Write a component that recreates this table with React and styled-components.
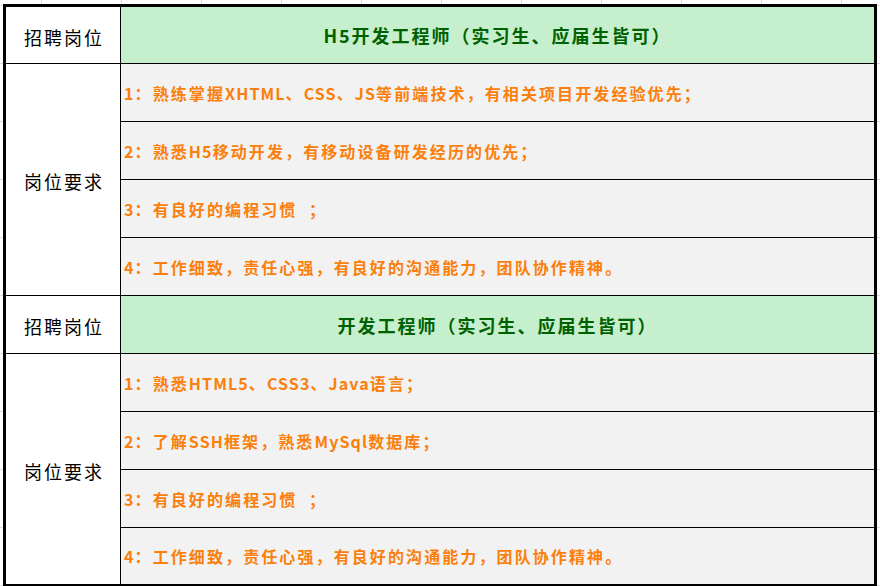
import styled, { createGlobalStyle } from "styled-components";

const GlobalStyle = createGlobalStyle`
  html, body {
    margin: 0;
    padding: 0;
  }
  body {
    min-height: 100vh;
    background-color: #fff;
    background-image:
      repeating-linear-gradient(90deg, transparent 0 41px, #dcdcdc 41px 42px, transparent 42px 80px),
      repeating-linear-gradient(180deg, transparent 0 5px, #dcdcdc 5px 6px, transparent 6px 58px);
    font-family: "Noto Sans CJK SC", "Microsoft YaHei", sans-serif;
  }
`;

const sections = [
  {
    title: "H5开发工程师（实习生、应届生皆可）",
    rows: "56px repeat(4, 57px)",
    items: [
      "1：熟练掌握XHTML、CSS、JS等前端技术，有相关项目开发经验优先；",
      "2：熟悉H5移动开发，有移动设备研发经历的优先；",
      "3：有良好的编程习惯  ；",
      "4：工作细致，责任心强，有良好的沟通能力，团队协作精神。",
    ],
  },
  {
    title: "开发工程师（实习生、应届生皆可）",
    rows: "repeat(4, 57px) 56px",
    items: [
      "1：熟悉HTML5、CSS3、Java语言；",
      "2：了解SSH框架，熟悉MySql数据库；",
      "3：有良好的编程习惯  ；",
      "4：工作细致，责任心强，有良好的沟通能力，团队协作精神。",
    ],
  },
];

// latin runs are set a little tighter than the CJK text around them
const withLatin = (text) =>
  text.split(/([A-Za-z0-9]+)/).map((part, i) =>
    /^[A-Za-z0-9]+$/.test(part) ? <Latin key={i}>{part}</Latin> : part
  );

function App() {
  return (
    <>
      <GlobalStyle />
      <Sheet>
        {sections.map((s, i) => (
          <Section key={i} $rows={s.rows}>
            <Label>招聘岗位</Label>
            <Title>{s.title}</Title>
            <Label $span={4}>岗位要求</Label>
            {s.items.map((item, j) => (
              <Requirement key={j}>{withLatin(item)}</Requirement>
            ))}
          </Section>
        ))}
      </Sheet>
    </>
  );
}

export default App;

const Sheet = styled.div`
  box-sizing: border-box;
  width: 874px;
  margin: 4px 0 0 3px;
  border: 3px solid #000;
  background: #000;
  display: grid;
  gap: 1px;
`;

const Section = styled.div`
  display: grid;
  grid-template-columns: 114px 1fr;
  grid-template-rows: ${(p) => p.$rows};
  gap: 1px;
`;

const Label = styled.div`
  grid-column: 1;
  grid-row: span ${(p) => p.$span || 1};
  background: #fff;
  display: flex;
  align-items: center;
  justify-content: center;
  padding-top: 3px;
  color: #000;
  font-size: 18px;
  letter-spacing: 2px;
  text-indent: 2px;
`;

const Title = styled.div`
  grid-column: 2;
  background: #c6efce;
  display: flex;
  align-items: center;
  justify-content: center;
  color: #006100;
  font-size: 18px;
  font-weight: 700;
  letter-spacing: 2px;
`;

const Requirement = styled.div`
  grid-column: 2;
  background: #f2f2f2;
  display: flex;
  align-items: center;
  white-space: pre;
  padding-left: 3px;
  color: #fb7f0c;
  font-size: 16px;
  font-weight: 700;
  letter-spacing: 2.1px;
`;

const Latin = styled.span`
  letter-spacing: 1.1px;
`;
